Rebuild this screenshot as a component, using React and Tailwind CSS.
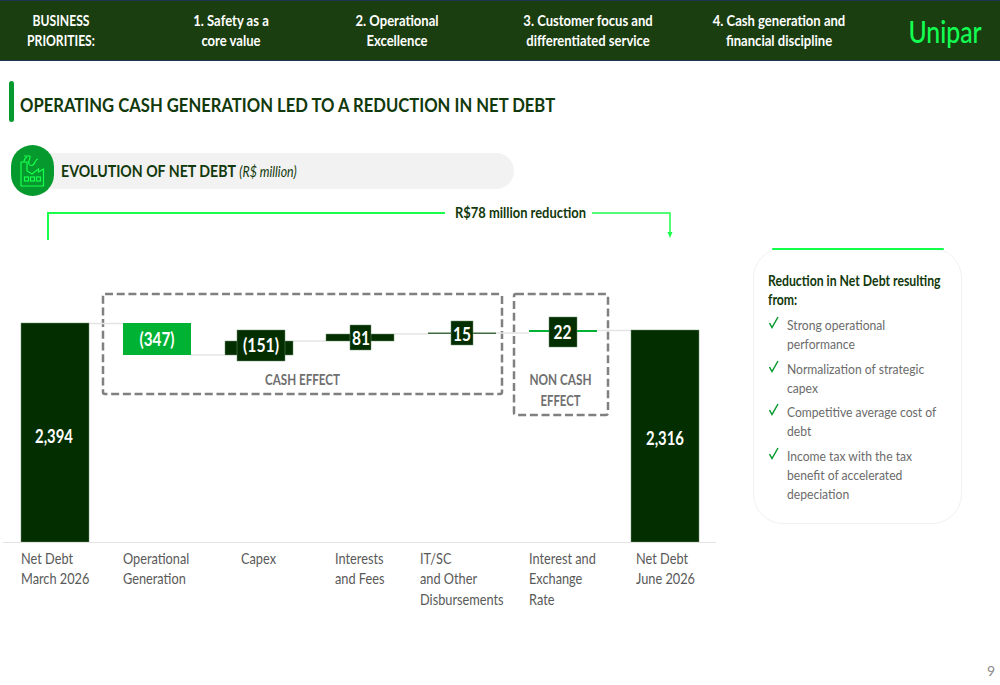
import React from "react";

const headerItems = [
  { width: "w-[122px]", squeeze: "scale-x-[0.81]", lines: ["BUSINESS", "PRIORITIES:"] },
  { width: "w-[218px]", squeeze: "scale-x-[0.87]", lines: ["1. Safety as a", "core value"] },
  { width: "w-[114px]", squeeze: "scale-x-[0.87]", lines: ["2. Operational", "Excellence"] },
  { width: "w-[268px]", squeeze: "scale-x-[0.87]", lines: ["3. Customer focus and", "differentiated service"] },
  { width: "w-[114px]", squeeze: "scale-x-[0.87]", lines: ["4. Cash generation and", "financial discipline"] },
];

const bullets = [
  ["Strong operational", "performance"],
  ["Normalization of strategic", "capex"],
  ["Competitive average cost of", "debt"],
  ["Income tax with the tax", "benefit of accelerated", "depeciation"],
];

const axisLabels = [
  { width: "w-[102px]", lines: ["Net Debt", "March 2026"] },
  { width: "w-[118px]", lines: ["Operational", "Generation"] },
  { width: "w-[94px]", lines: ["Capex"] },
  { width: "w-[85px]", lines: ["Interests", "and Fees"] },
  { width: "w-[109px]", lines: ["IT/SC", "and Other", "Disbursements"] },
  { width: "w-[107px]", lines: ["Interest and", "Exchange", "Rate"] },
  { width: "w-[70px]", lines: ["Net Debt", "June 2026"] },
];

const DARK = "#032e00";
const EDGE = "#6f8f6f";

// [x, y, w, h, fill]
const blocks = [
  [21, 323, 68, 219, DARK],
  [631, 330, 68, 212, DARK],
  [123, 323, 68, 32, "#00b233"],
  [225, 341, 68, 14, DARK],
  [237, 330, 48, 31, DARK],
  [326, 334, 68, 7, DARK],
  [350, 325, 21, 25, DARK],
  [428, 332.5, 68, 1.5, "#3f6b3f"],
  [451, 321, 22, 24, DARK],
  [529, 330, 68, 2, "#00b233"],
  [549, 317, 28, 30, DARK],
];

// [text, center x, baseline y, width]
const values = [
  ["2,394", 54, 443, 38],
  ["2,316", 665, 445, 38],
  ["(347)", 157, 346, 35],
  ["(151)", 261, 352, 36],
  ["81", 361, 345, 18],
  ["15", 462, 341, 18],
  ["22", 562.5, 339, 18],
];

// [x1, y, x2]
const connectors = [
  [89, 323.5, 123],
  [191, 355, 225],
  [293, 341, 326],
  [394, 334, 428],
  [496, 333, 529],
  [597, 330.5, 631],
];

function FactoryIcon() {
  return (
    <svg width="25" height="34" viewBox="0 0 25 34" fill="none" stroke="#19ff4d" strokeWidth="1.2">
      <path d="M1 8V32H23.5V15L18.5 18V15L12 20L7 17V8Z" />
      <path d="M4 2H10C11 5 7 7 9 10C11 13 14 11 15 8C16 6 17 5 18 5" />
      <path d="M4 8C4 5 5 4 7 3" />
      <rect x="4.5" y="23" width="4" height="4" />
      <rect x="10.5" y="23" width="4" height="4" />
      <rect x="16.5" y="23" width="4" height="4" />
    </svg>
  );
}

function WaterfallChart() {
  return (
    <svg width="753" height="337" viewBox="0 205 753 337" fill="none" className="block">
      {/* total bracket */}
      <path d="M48 240V213H445" stroke="#1aff4a" strokeWidth="2" />
      <path d="M592 213H670V233" stroke="#1aff4a" strokeWidth="1.5" />
      <path d="M667.5 232h5L670 238z" fill="#1aff4a" />
      <text x="520.5" y="218" textAnchor="middle" textLength="131" lengthAdjust="spacingAndGlyphs" fontSize="14.5" fontWeight="700" fill="#12390c">
        R$78 million reduction
      </text>

      {/* effect groups */}
      <rect x="103" y="294" width="399" height="100" rx="2" stroke="#808080" strokeWidth="2.5" strokeDasharray="8 3.7" />
      <rect x="514" y="294" width="94" height="121" rx="2" stroke="#808080" strokeWidth="2.5" strokeDasharray="8 3.7" />
      <g fontSize="15.5" fontWeight="700" fill="#6f6f6f" textAnchor="middle">
        <text x="302.5" y="385" textLength="75" lengthAdjust="spacingAndGlyphs">CASH EFFECT</text>
        <text x="560.5" y="385" textLength="62" lengthAdjust="spacingAndGlyphs">NON CASH</text>
        <text x="560.5" y="406" textLength="40" lengthAdjust="spacingAndGlyphs">EFFECT</text>
      </g>

      {connectors.map(([x1, y, x2]) => (
        <line key={x1} x1={x1} y1={y} x2={x2} y2={y} stroke="#e4e4e4" strokeWidth="1.5" />
      ))}

      {blocks.map(([x, y, w, h, fill]) => (
        <rect key={`${x}-${y}`} x={x} y={y} width={w} height={h} fill={fill} stroke={h > 5 && fill === DARK ? EDGE : "none"} strokeWidth="0.5" />
      ))}

      <g fontSize="18" fontWeight="700" fill="#ffffff" textAnchor="middle">
        {values.map(([label, x, y, w]) => (
          <text key={label} x={x} y={y} textLength={w} lengthAdjust="spacingAndGlyphs">
            {label}
          </text>
        ))}
      </g>
    </svg>
  );
}

export default function App() {
  return (
    <div
      className="w-[1000px] h-[685px] overflow-hidden bg-white flex flex-col"
      style={{ fontFamily: '"Lato", "Open Sans", sans-serif' }}
    >
      {/* Top band */}
      <div className="h-[61px] shrink-0 bg-[#1a3e10] border-y border-y-[#1b3554] flex items-center text-white text-[15px] leading-[20.5px] font-bold">
        {headerItems.map((item) => (
          <div key={item.lines[0]} className={`${item.width} ${item.squeeze} pb-[1px] flex flex-col items-center whitespace-nowrap`}>
            {item.lines.map((l) => (
              <div key={l}>{l}</div>
            ))}
          </div>
        ))}
        <div className="ml-[54px] w-[110px] text-center text-[#12ff52] text-[31px] leading-9 font-medium scale-x-[0.8]">Unipar</div>
      </div>

      {/* Title */}
      <div className="flex mt-[20px] pl-[9px] gap-[6px] h-[41px]">
        <div className="w-[5px] h-[41px] rounded-sm bg-[#069a2e]" />
        <h1 className="pt-[10px] text-[19.5px] leading-7 font-bold text-[#12390c] whitespace-nowrap origin-left scale-x-[0.853]">
          OPERATING CASH GENERATION LED TO A REDUCTION IN NET DEBT
        </h1>
      </div>

      {/* Section pill */}
      <div className="flex items-center mt-[23px] pl-[11px] h-[51px]">
        <div className="relative z-10 w-[43px] h-[51px] rounded-full bg-[#069a2e] flex items-center justify-center">
          <FactoryIcon />
        </div>
        <div className="-ml-[4px] w-[464px] h-[36px] rounded-r-full rounded-l-2xl bg-[#f2f2f2] flex items-center pl-[11px]">
          <div className="whitespace-nowrap origin-left scale-x-[0.833] text-[#12390c]">
            <span className="text-[17px] font-bold">EVOLUTION OF NET DEBT</span>{" "}
            <span className="text-[14.8px] italic">(R$ million)</span>
          </div>
        </div>
      </div>

      {/* Chart + side card */}
      <div className="flex mt-[9px]">
        <div className="w-[753px] shrink-0">
          <WaterfallChart />
          <div className="ml-[3px] w-[713px] border-t border-t-[#e3e3e3] pl-[18px] pt-[5px] flex text-[15px] leading-[20.3px] text-[#595959]">
            {axisLabels.map((a) => (
              <div key={a.lines[0] + a.width} className={`${a.width} shrink-0 whitespace-nowrap origin-left scale-x-[0.85]`}>
                {a.lines.map((l) => (
                  <div key={l}>{l}</div>
                ))}
              </div>
            ))}
          </div>
        </div>

        {/* Side card */}
        <div className="w-[209px] h-[276px] mt-[43px] shrink-0 rounded-[30px] border border-[#f1f1f1] pl-[14px]">
          <div className="-mt-px ml-[4px] mr-[17px] h-[2px] rounded-full bg-[#12ff4a]" />
          <div className="mt-[21px] text-[14.5px] leading-[19px] font-bold text-[#12390c] whitespace-nowrap origin-left scale-x-[0.845]">
            Reduction in Net Debt resulting
            <br />
            from:
          </div>
          <div className="mt-[6px] flex flex-col gap-[5px]">
            {bullets.map((lines) => (
              <div key={lines[0]} className="flex">
                <svg className="shrink-0 mt-[1px]" width="19" height="13" viewBox="0 0 19 13" fill="none">
                  <path d="M1.5 7 4 11.5 10 1" stroke="#069a2e" strokeWidth="1.5" />
                </svg>
                <div className="text-[14px] leading-[19.3px] text-[#6b6b6b] whitespace-nowrap origin-left scale-x-[0.866]">
                  {lines.map((l) => (
                    <div key={l}>{l}</div>
                  ))}
                </div>
              </div>
            ))}
          </div>
        </div>
      </div>

      <div className="mt-auto pb-[6px] pr-[5px] text-right text-[14px] leading-4 text-[#8a8a8a]">9</div>
    </div>
  );
}
